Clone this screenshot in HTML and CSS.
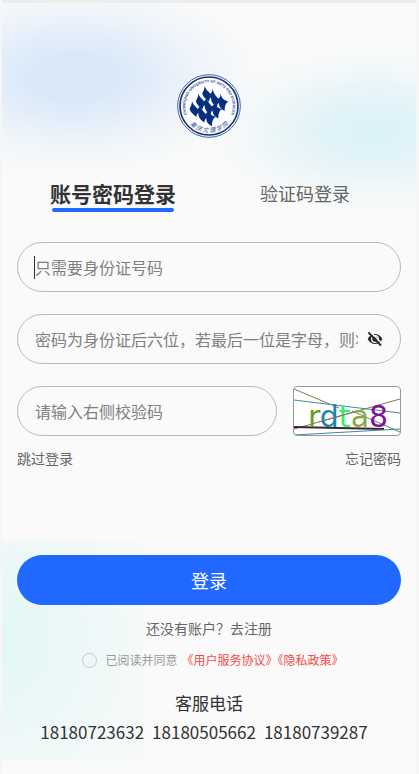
FILE: index.html
```html
<!DOCTYPE html>
<html lang="zh-CN">
<head>
    <meta charset="UTF-8">
    <meta name="viewport" content="width=device-width, initial-scale=1.0">
    <title>登录</title>
    <link rel="stylesheet" href="styles.css">
</head>
<body>
    <main class="login-page">
        <svg class="logo" viewBox="0 0 192 192" role="img" aria-label="校徽">
            <defs>
                <path id="arc-top" d="M29 120 A71 71 0 1 1 163 120"/>
                <path id="arc-bottom" d="M31 142 A80 80 0 0 0 161 142"/>
                <path id="wave" d="M0 0 C3 12 12 17 17 24 Q23 21 24 10 C27 26 36 33 41 39 Q47 36 48 25 C51 40 60 44 72 48 C62 52 60 62 60 76 C50 70 42 64 43 51 Q37 55 37 64 C28 58 18 50 19 35 Q13 39 13 48 C4 40 -6 34 -7 22 C-3 16 0 8 0 0Z"/>
            </defs>
            <circle cx="96" cy="96" r="94" fill="#fcfdff" stroke="#4a629d" stroke-width="3"/>
            <circle cx="96" cy="96" r="87" fill="none" stroke="#103383" stroke-width="5"/>
            <g fill="#06307f">
                <use href="#wave" x="83" y="35"/>
                <use href="#wave" x="64" y="58"/>
                <use href="#wave" x="45" y="81"/>
            </g>
            <text class="logo-en"><textPath href="#arc-top" startOffset="50%">CHONGQING UNIVERSITY OF ARTS AND SCIENCES</textPath></text>
            <text class="logo-cn"><textPath href="#arc-bottom" startOffset="50%">重 庆 文 理 学 院</textPath></text>
        </svg>

        <div class="tabs" role="tablist">
            <button class="tab active" type="button" role="tab" aria-selected="true">账号密码登录</button>
            <button class="tab" type="button" role="tab" aria-selected="false">验证码登录</button>
        </div>

        <form class="login-form">
            <div class="field focused">
                <input type="text" placeholder="只需要身份证号码" aria-label="身份证号码">
            </div>
            <div class="field password">
                <input type="password" placeholder="密码为身份证后六位，若最后一位是字母，则将" aria-label="密码">
                <button class="eye" type="button" aria-label="显示密码">
                    <svg viewBox="0 0 24 24">
                        <path d="M1 12 C6 2 18 2 23 12 C18 22 6 22 1 12Z" fill="#282828"/>
                        <circle cx="12" cy="12" r="5" fill="#282828" stroke="#fafafa" stroke-width="2"/>
                        <path d="M5 1 L24 20" stroke="#fafafa" stroke-width="2"/>
                        <path d="M2 2 L21 22" stroke="#282828" stroke-width="3"/>
                    </svg>
                </button>
            </div>
            <div class="code-row">
                <div class="field">
                    <input type="text" placeholder="请输入右侧校验码" aria-label="校验码">
                </div>
                <button class="captcha" type="button" aria-label="刷新校验码">
                    <svg viewBox="0 0 106 48">
                        <g fill="none" stroke-width="1">
                            <path d="M0 2 L45 21" stroke="#887a4e"/>
                            <path d="M0 13 L106 26" stroke="#438ba2"/>
                            <path d="M0 42 L106 12" stroke="#87705c"/>
                            <path d="M58 24 L106 45" stroke="#78804a"/>
                            <path d="M0 40 L90 42" stroke="#40222e" stroke-width="2"/>
                            <path d="M0 48 L106 42" stroke="#3c88a4"/>
                        </g>
                        <text class="captcha-text" x="14" y="40"><tspan fill="#659d28">r</tspan><tspan fill="#1687ae">d</tspan><tspan fill="#39ed6b">t</tspan><tspan fill="#83a947">a</tspan><tspan fill="#7d159c">8</tspan></text>
                        <path d="M25 35 L60 25" stroke="#87705c"/>
                    </svg>
                </button>
            </div>
            <div class="links">
                <a href="#">跳过登录</a>
                <a href="#">忘记密码</a>
            </div>

            <button class="submit" type="submit">登录</button>
            <a class="register" href="#">还没有账户？去注册</a>
            <div class="agreement">
                <input type="radio" id="agree">
                <label for="agree">已阅读并同意</label>
                <span><a href="#">《用户服务协议》</a><a href="#">《隐私政策》</a></span>
            </div>
        </form>

        <footer class="service">
            <h2>客服电话</h2>
            <div class="phones">
                <a href="tel:18180723632">18180723632</a>
                <a href="tel:18180505662">18180505662</a>
                <a href="tel:18180739287">18180739287</a>
            </div>
        </footer>
    </main>
</body>
</html>
```

FILE: styles.css
```css
* {
    box-sizing: border-box;
}
body {
    margin: 0;
    font-family: "Noto Sans CJK SC", sans-serif;
    color: #333;
    background: #f6f6f6;
}
button, input {
    font-family: inherit;
}
button {
    padding: 0;
    border: 0;
    background: none;
    cursor: pointer;
}
a {
    color: inherit;
    text-decoration: none;
}
.login-page {
    display: flex;
    flex-direction: column;
    min-height: 100vh;
    margin: 0 3px 0 2px;
    padding: 71px 15px 26px;
    border-top: 3px solid #ececec;
    background:
        radial-gradient(ellipse 190px 100px at 72px 74px, #d8e8f9 0%, #dae9f9 24%, #e6effa 48%, #f0f5fa 68%, #f0f5fa00 100%),
        radial-gradient(ellipse 170px 84px at 372px 128px, #daf2f9 0%, #e0f3f9 28%, #ebf5f8 56%, #f2f8f9 72%, #f2f8f900 100%),
        radial-gradient(ellipse 145px 160px at 0 100px, #e3f7f7 0%, #eaf8f7 45%, #f6f9f9 100%) 0 538px / 141px 220px no-repeat,
        #fafafa;
}

/* 校徽 */
.logo {
    width: 64px;
    height: 64px;
    align-self: center;
}
.logo-en {
    font: 700 11px "Liberation Sans", sans-serif;
    fill: #304d8d;
    text-anchor: middle;
}
.logo-cn {
    font-size: 18px;
    font-style: italic;
    fill: #304d8d;
    text-anchor: middle;
}

/* 登录方式 */
.tabs {
    display: grid;
    grid-template-columns: 1fr 1fr;
    height: 64px;
    margin-top: 40px;
    align-items: start;
    justify-items: center;
}
.tab {
    height: 34px;
    padding-bottom: 4px;
    line-height: 30px;
    font-size: 18px;
    color: #666;
}
.tab.active {
    position: relative;
    font-size: 21px;
    font-weight: 700;
    color: #333;
}
.tab.active::after {
    content: "";
    position: absolute;
    left: 2px;
    right: 2px;
    bottom: 0;
    height: 4px;
    border-radius: 2px;
    background: #2068ff;
}

/* 表单 */
.login-form {
    display: flex;
    flex-direction: column;
}
.field {
    position: relative;
    display: flex;
    align-items: center;
    height: 50px;
    margin-bottom: 22px;
    padding: 0 17px;
    border: 1px solid #bbb;
    border-radius: 25px;
}
.field input {
    flex: 1;
    min-width: 0;
    height: 32px;
    padding: 0;
    border: 0;
    outline: none;
    background: transparent;
    font-size: 16px;
    color: #333;
}
.field input::placeholder {
    color: #808080;
    opacity: 1;
}
.focused::before {
    content: "";
    position: absolute;
    left: 16px;
    width: 1px;
    height: 23px;
    background: #333;
}
.password {
    gap: 9px;
}
.eye {
    width: 16px;
    height: 16px;
}
.eye svg {
    display: block;
}
.code-row {
    display: flex;
    gap: 16px;
}
.code-row .field {
    flex: 1;
    margin-bottom: 0;
}
.captcha {
    width: 108px;
    height: 50px;
    overflow: hidden;
    border: 1px solid #999;
    border-radius: 4px;
    background: #fff;
}
.captcha svg {
    display: block;
    width: 100%;
    height: 100%;
}
.captcha-text {
    font-family: "DejaVu Sans", sans-serif;
    font-size: 30px;
}
.links {
    display: flex;
    justify-content: space-between;
    margin-top: 10px;
    font-size: 14px;
    line-height: 24px;
    color: #666;
}
.submit {
    height: 50px;
    margin-top: 85px;
    border-radius: 25px;
    background: #2068ff;
    font-size: 18px;
    line-height: 48px;
    color: #fff;
}
.register {
    align-self: center;
    margin-top: 11px;
    font-size: 14px;
    line-height: 24px;
    color: #666;
}
.agreement {
    display: flex;
    align-items: center;
    justify-content: center;
    margin-top: 8px;
    padding-left: 8px;
    font-size: 12px;
    line-height: 24px;
    color: #999;
}
.agreement input {
    appearance: none;
    width: 15px;
    height: 15px;
    margin: 0 8px 0 0;
    border: 1px solid #c8c8c8;
    border-radius: 50%;
}
.agreement label {
    margin-right: 4px;
}
.agreement a {
    color: #f04a4a;
}

/* 客服 */
.service {
    margin-top: 17px;
    text-align: center;
}
.service h2 {
    margin: 0;
    font-size: 17px;
    font-weight: 400;
    line-height: 28px;
}
.phones {
    display: flex;
    justify-content: center;
    gap: 8px;
    padding-right: 10px;
    font-size: 17px;
    line-height: 30px;
}
```
